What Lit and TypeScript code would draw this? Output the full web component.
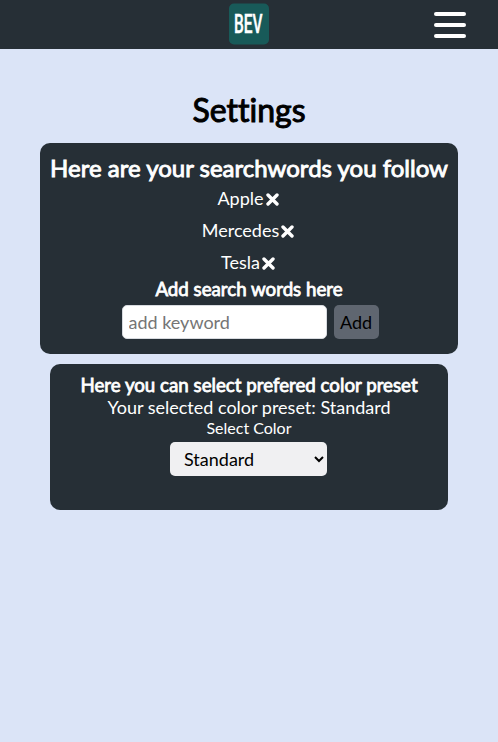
import { LitElement, html, css } from "lit";
import { customElement, state } from "lit/decorators.js";

@customElement("app-root")
export class AppRoot extends LitElement {
  @state() private words = ["Apple", "Mercedes", "Tesla"];
  @state() private preset = "Standard";

  static styles = css`
    :host {
      display: block;
      height: 742px;
      overflow: hidden;
      background: #dbe4f7;
      font-family: "Lato", sans-serif;
      font-size: 18px;
      color: #000;
    }
    * { box-sizing: border-box; }
    h1, h2, h3, p, ul { margin: 0; padding: 0; font-weight: 400; }
    header {
      height: 49px;
      background: #262f36;
      display: grid;
      grid-template-columns: 1fr 42px 1fr;
      align-items: start;
    }
    .logo { grid-column: 2; display: block; margin-top: 3px; overflow: visible; }
    .logo text { font: 500 25px "Roboto", sans-serif; fill: #fff; stroke: #fff; stroke-width: 0.4px; }
    .menu {
      justify-self: end;
      margin: 12px 32px 0 0;
      padding: 0;
      border: 0;
      background: none;
      display: grid;
      gap: 7px;
    }
    .bar { width: 32px; height: 4px; border-radius: 2px; background: #fff; }
    main { display: flex; flex-direction: column; align-items: center; }
    h1 {
      margin-top: 41px;
      height: 53px;
      line-height: 40px;
      font-size: 32px;
      font-variant-ligatures: none;
      -webkit-text-stroke: 1px currentColor;
    }
    .card {
      background: #262f36;
      color: #fff;
      border-radius: 10px;
      display: flex;
      flex-direction: column;
      align-items: center;
      white-space: nowrap;
    }
    .words { width: 418px; height: 211px; padding-top: 10px; }
    .presets { width: 398px; height: 146px; margin-top: 10px; padding-top: 9px; }
    h2 { font-size: 24px; line-height: 30px; height: 29px; -webkit-text-stroke: 0.9px currentColor; }
    h3 { font-size: 18.72px; line-height: 24px; height: 23px; -webkit-text-stroke: 0.8px currentColor; }
    ul { list-style: none; margin-bottom: -1px; }
    li { height: 32px; line-height: 30px; display: flex; justify-content: center; align-items: center; }
    li svg { margin: 2px 2px 0 2px; }
    form { display: flex; gap: 7px; margin: 5px 0 0 2px; }
    input, select, .add { font: 18px "Lato", sans-serif; height: 34px; border: 0; border-radius: 5px; }
    input { width: 205px; padding: 1px 6px; background: #fff; border: 1px solid #d8dbe0; }
    input::placeholder { color: #757575; opacity: 1; }
    .add { width: 45px; padding: 0; background: #5f6670; color: #000; }
    p { line-height: 22px; }
    label { font-size: 16px; line-height: 20px; }
    select { width: 157px; margin: 4px 1px 0 0; padding: 0 0 0 10px; background: #f0f0f2; color: #000; }
  `;

  private remove(word: string) {
    this.words = this.words.filter((w) => w !== word);
  }

  render() {
    return html`
      <header>
        <svg class="logo" width="42" height="42" viewBox="0 0 42 42">
          <rect x="1" y="0.5" width="40" height="41" rx="5" fill="#185a59" />
          <text transform="translate(6 30) scale(0.62 1)">BEV</text>
        </svg>
        <button class="menu" aria-label="Menu">
          <span class="bar"></span><span class="bar"></span><span class="bar"></span>
        </button>
      </header>
      <main>
        <h1>Settings</h1>
        <section class="card words">
          <h2>Here are your searchwords you follow</h2>
          <ul>
            ${this.words.map(
              (w) => html`<li>
                <span>${w}</span>
                <svg width="13" height="13" viewBox="0 0 13 13" @click=${() => this.remove(w)}>
                  <path d="M2 2 L11 11 M11 2 L2 11" stroke="#fff" stroke-width="3.4" stroke-linecap="round" />
                </svg>
              </li>`
            )}
          </ul>
          <h3>Add search words here</h3>
          <form @submit=${(e: Event) => e.preventDefault()}>
            <input placeholder="add keyword" />
            <button class="add">Add</button>
          </form>
        </section>
        <section class="card presets">
          <h3>Here you can select prefered color preset</h3>
          <p>Your selected color preset: ${this.preset}</p>
          <label for="preset">Select Color</label>
          <select id="preset">
            <option>Standard</option>
          </select>
        </section>
      </main>
    `;
  }
}
